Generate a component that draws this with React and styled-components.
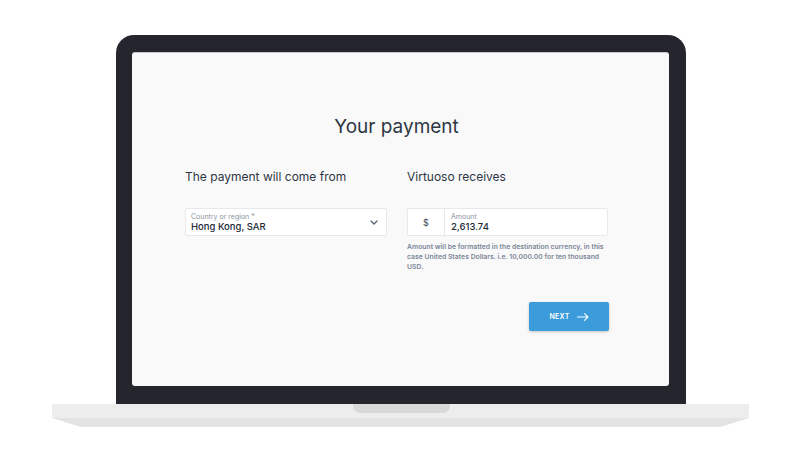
import React from 'react';
import styled, { createGlobalStyle } from 'styled-components';

const GlobalStyle = createGlobalStyle`
  html, body {
    margin: 0;
    padding: 0;
    background: #ffffff;
  }
  body {
    font-family: Inter, "Noto Sans", "Liberation Sans", sans-serif;
  }
`;

const Page = styled.div`
  width: 800px;
  height: 463px;
  padding: 35px 0 0 52px;
  box-sizing: border-box;
  display: flex;
  flex-direction: column;
  align-items: flex-start;
  overflow: hidden;
`;

const Lid = styled.div`
  margin-left: 64px;
  width: 570px;
  height: 369px;
  box-sizing: border-box;
  padding: 17px 17px 18px 16px;
  background: #25252e;
  border-radius: 18px 18px 0 0;
`;

const Screen = styled.div`
  width: 537px;
  height: 334px;
  box-sizing: border-box;
  background: #f9f9f9;
  border-top: 1px solid #c9c9cf;
  border-radius: 3px;
  padding: 62px 0 0 53px;
`;

const Form = styled.div`
  width: 423px;
  display: flex;
  flex-direction: column;
`;

const Title = styled.h1`
  margin: 0;
  font-size: 19px;
  line-height: 24px;
  font-weight: 400;
  color: #2e3744;
  text-align: center;
`;

const Columns = styled.div`
  margin-top: 30px;
  display: grid;
  grid-template-columns: 202px 201px;
  column-gap: 20px;
`;

const Column = styled.div`
  display: flex;
  flex-direction: column;
`;

const Heading = styled.h2`
  margin: 0 0 23px;
  font-size: 12px;
  line-height: 16px;
  font-weight: 400;
  color: #2e3744;
`;

const Field = styled.div`
  height: 28px;
  box-sizing: border-box;
  background: #ffffff;
  border: 1px solid #e6e8ec;
  border-radius: 2px;
  display: flex;
  align-items: stretch;
`;

const Prefix = styled.div`
  width: 36px;
  flex: none;
  border-right: 1px solid #e6e8ec;
  display: flex;
  align-items: center;
  justify-content: center;
  font-size: 9px;
  color: #3a4350;
`;

const FieldBody = styled.div`
  flex: 1;
  display: flex;
  flex-direction: column;
  justify-content: center;
  padding-left: ${p => p.$pad || 5}px;
`;

const Label = styled.span`
  font-size: 7px;
  line-height: 9px;
  color: #8a93a1;
`;

const Value = styled.span`
  font-size: 9.5px;
  line-height: 12px;
  font-weight: 500;
  color: #222a36;
`;

const Chevron = styled.div`
  width: 24px;
  display: flex;
  align-items: center;
  justify-content: center;
  color: #5b6676;
`;

const Help = styled.p`
  margin: 6px 0 0;
  font-size: 6.85px;
  line-height: 10px;
  font-weight: 600;
  color: #7b8698;
`;

const Actions = styled.div`
  margin-top: 30px;
  display: flex;
  justify-content: flex-end;
`;

const Button = styled.button`
  width: 80px;
  height: 29px;
  margin-right: -1px;
  border: none;
  border-radius: 2px;
  background: #3b9bdb;
  box-shadow: 0 1px 3px rgba(0, 0, 0, 0.22);
  color: #ffffff;
  font-family: inherit;
  font-size: 7px;
  font-weight: 600;
  letter-spacing: 0.3px;
  display: flex;
  align-items: center;
  justify-content: center;
  gap: 7px;
  padding: 0;
`;

const Base = styled.div`
  width: 697px;
  height: 23px;
  display: flex;
  flex-direction: column;
  clip-path: polygon(0 0, 100% 0, 100% 14px, calc(100% - 29px) 100%, 29px 100%, 0 14px);
`;

const BaseTop = styled.div`
  height: 14px;
  background: #ededed;
  display: flex;
  justify-content: center;
`;

const BaseBottom = styled.div`
  flex: 1;
  background: #e3e3e3;
`;

const Notch = styled.div`
  width: 97px;
  height: 9px;
  margin-left: 1px;
  background: #d9d9d9;
  border-radius: 0 0 7px 7px;
`;

export default function App() {
  return (
    <Page>
      <GlobalStyle />
      <Lid>
        <Screen>
          <Form>
            <Title>Your payment</Title>
            <Columns>
              <Column>
                <Heading>The payment will come from</Heading>
                <Field>
                  <FieldBody>
                    <Label>Country or region *</Label>
                    <Value>Hong Kong, SAR</Value>
                  </FieldBody>
                  <Chevron>
                    <svg width="8" height="5" viewBox="0 0 8 5" fill="none">
                      <path d="M1 1l3 3 3-3" stroke="currentColor" strokeWidth="1.4" strokeLinecap="round" strokeLinejoin="round" />
                    </svg>
                  </Chevron>
                </Field>
              </Column>
              <Column>
                <Heading>Virtuoso receives</Heading>
                <Field>
                  <Prefix>$</Prefix>
                  <FieldBody $pad={6}>
                    <Label>Amount</Label>
                    <Value>2,613.74</Value>
                  </FieldBody>
                </Field>
                <Help>
                  Amount will be formatted in the destination currency, in this case United States Dollars. i.e. 10,000.00 for ten thousand USD.
                </Help>
              </Column>
            </Columns>
            <Actions>
              <Button>
                NEXT
                <svg width="12" height="8" viewBox="0 0 12 8" fill="none">
                  <path d="M0.5 4h10.5M7.5 0.7L11 4l-3.5 3.3" stroke="#ffffff" strokeWidth="1.1" strokeLinecap="round" strokeLinejoin="round" />
                </svg>
              </Button>
            </Actions>
          </Form>
        </Screen>
      </Lid>
      <Base>
        <BaseTop>
          <Notch />
        </BaseTop>
        <BaseBottom />
      </Base>
    </Page>
  );
}
